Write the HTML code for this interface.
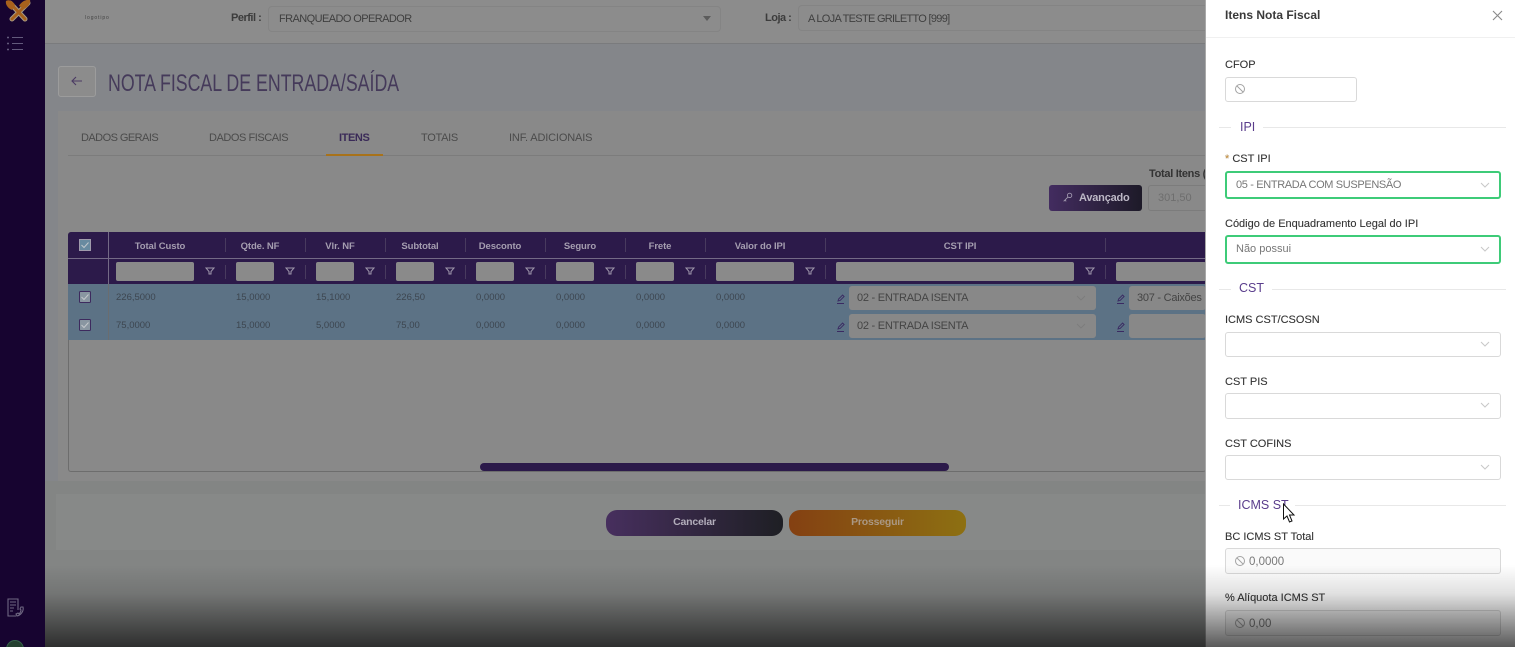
<!DOCTYPE html>
<html lang="pt"><head><meta charset="utf-8"><title>Nota Fiscal</title>
<style>
html,body{margin:0;padding:0;width:1515px;height:647px;overflow:hidden;background:#84868a;font-family:"Liberation Sans",sans-serif}
#root{position:relative;width:1515px;height:647px;overflow:hidden}
#root div,#root svg{position:absolute;box-sizing:border-box;white-space:nowrap}
.t{line-height:14px}
.tab{font-size:11px;color:#4b4b4b;top:131px}
.th{font-size:9.500px;font-weight:bold;color:#a59eb0;top:240px;text-align:center;letter-spacing:-.1px}
.sep{width:1px;background:#483a5e}
.fi{top:262px;height:19px;background:#8a8a8a;border-radius:2px}
.c{font-size:9.500px;color:#3d4650}
.sel{background:#888;border-radius:3px;height:24px;font-size:11px;color:#444;line-height:25px;padding-left:8px;letter-spacing:-.25px}
.lab{font-size:11px;color:#333;left:1225px;-webkit-text-stroke:.1px #333}
.box{left:1225px;width:276px;height:25px;background:#fff;border:1px solid #d9d9d9;border-radius:3px;font-size:11px;color:#777;line-height:23px}
.sec{font-size:12.500px;color:#5a3d8c;line-height:16px}
.hr{height:1px;background:#e8e8e8}
</style></head><body><div id="root">

<!-- lower page background -->
<div style="left:45px;top:481px;width:1161px;height:166px;background:#838584"></div>

<!-- header -->
<div style="left:45px;top:0;width:1161px;height:44px;background:#8c8c8c;border-bottom:1px solid #7a7b7d"></div>
<div class="t" style="left:85px;top:11px;font-size:5px;letter-spacing:.9px;color:#444">logotipo</div>
<div class="t" style="left:231px;top:11px;font-size:11px;font-weight:bold;color:#3c3c3c;letter-spacing:-.5px">Perfil :</div>
<div style="left:268px;top:6px;width:453px;height:26px;border:1px solid #848484;border-radius:4px"></div>
<div class="t" style="left:279px;top:12px;font-size:11px;color:#3f3f3f;letter-spacing:-.58px">FRANQUEADO OPERADOR</div>
<div style="left:703px;top:16px;border:4px solid transparent;border-top:5px solid #5c5c5c"></div>
<div class="t" style="left:765px;top:11px;font-size:11px;font-weight:bold;color:#3c3c3c;letter-spacing:-.5px">Loja :</div>
<div style="left:798px;top:5px;width:408px;height:26px;border:1px solid #848484;border-right:0;border-radius:4px 0 0 4px"></div>
<div class="t" style="left:808px;top:12px;font-size:11px;color:#3f3f3f;letter-spacing:-.7px">A LOJA TESTE GRILETTO [999]</div>

<!-- title -->
<div style="left:58px;top:66px;width:38px;height:31px;background:#8c8c8c;border:1px solid #9c9c9c;border-radius:3px"></div>
<svg style="left:70px;top:74px" width="14" height="14" viewBox="0 0 14 14" fill="none" stroke="#4b3a63" stroke-width="1.100"><path d="M12 7H2M6 3L2 7l4 4"/></svg>
<div style="left:108px;top:69px;font-size:24px;line-height:30px;color:#453a5a;transform:scaleX(.74);transform-origin:0 0">NOTA FISCAL DE ENTRADA/SAÍDA</div>

<!-- card -->
<div style="left:58px;top:111px;width:1148px;height:370px;background:#898989"></div>
<div class="t tab" style="left:81px;letter-spacing:-.55px">DADOS GERAIS</div>
<div class="t tab" style="left:209px;letter-spacing:-.45px">DADOS FISCAIS</div>
<div class="t tab" style="left:339px;color:#3a2a58;font-weight:bold;letter-spacing:-.4px">ITENS</div>
<div class="t tab" style="left:421px;letter-spacing:-.3px">TOTAIS</div>
<div class="t tab" style="left:509px;letter-spacing:-.15px">INF. ADICIONAIS</div>
<div style="left:68px;top:155px;width:1138px;height:1px;background:#7c7c7c"></div>
<div style="left:326px;top:154px;width:57px;height:2px;background:#a8721a"></div>

<div class="t" style="left:1149px;top:167px;font-size:11px;font-weight:bold;color:#333;width:57px;overflow:hidden;letter-spacing:-.3px">Total Itens (R$)</div>
<div style="left:1049px;top:185px;width:93px;height:26px;border-radius:3px;background:linear-gradient(90deg,#432c60,#1d1a28)"></div>
<svg style="left:1062px;top:192px" width="11" height="11" viewBox="0 0 13 13" fill="none" stroke="#a59db2" stroke-width="1"><circle cx="9" cy="4" r="2.600"/><path d="M7 6L2 11M3.500 9.500l1.500 1.500"/></svg>
<div class="t" style="left:1079px;top:191px;font-size:11px;font-weight:bold;color:#bdb8c6;letter-spacing:-.2px">Avançado</div>
<div style="left:1148px;top:185px;width:58px;height:26px;border:1px solid #7c7c7c;border-right:0;border-radius:3px 0 0 3px"></div>
<div class="t" style="left:1158px;top:191px;font-size:11px;color:#6e6e6e">301,50</div>

<!-- table -->
<div style="left:68px;top:232px;width:1138px;height:240px;border:1px solid #6d6d6d;border-right:0;border-radius:3px"></div>
<div style="left:68px;top:232px;width:1138px;height:52px;background:#2c1a4a;border-radius:3px 0 0 0"></div>
<div style="left:68px;top:258px;width:1138px;height:1px;background:#746a86"></div>
<div style="left:108px;top:232px;width:1px;height:52px;background:#746a86"></div>
<div style="left:68px;top:284px;width:1138px;height:56px;background:#5c7285"></div>
<div style="left:108px;top:284px;width:1px;height:56px;background:#6a6d70"></div>

<svg style="left:79px;top:239px" width="12" height="12" viewBox="0 0 12 12" fill="#688aa0" stroke="#a09bac"><rect x=".5" y=".5" width="11" height="11"/><path d="M2.500 6l2.500 2.500 4.500-5" fill="none" stroke="#c0c7cc"/></svg>
<svg style="left:79px;top:291px" width="12" height="12" viewBox="0 0 12 12" fill="#8996a1" stroke="#3d2a5e"><rect x=".5" y=".5" width="11" height="11" rx="1"/><path d="M2.500 6l2.500 2.500 4.500-5" fill="none" stroke="#c4c8cc"/></svg>
<svg style="left:79px;top:319px" width="12" height="12" viewBox="0 0 12 12" fill="#8996a1" stroke="#3d2a5e"><rect x=".5" y=".5" width="11" height="11" rx="1"/><path d="M2.500 6l2.500 2.500 4.500-5" fill="none" stroke="#c4c8cc"/></svg>

<div class="t th" style="left:108px;width:104px">Total Custo</div>
<div class="t th" style="left:226px;width:68px">Qtde. NF</div>
<div class="t th" style="left:306px;width:68px">Vlr. NF</div>
<div class="t th" style="left:386px;width:68px">Subtotal</div>
<div class="t th" style="left:466px;width:68px">Desconto</div>
<div class="t th" style="left:546px;width:68px">Seguro</div>
<div class="t th" style="left:626px;width:68px">Frete</div>
<div class="t th" style="left:706px;width:108px">Valor do IPI</div>
<div class="t th" style="left:826px;width:268px">CST IPI</div>

<div class="sep" style="left:225px;top:238px;height:14px"></div><div class="sep" style="left:305px;top:238px;height:14px"></div><div class="sep" style="left:385px;top:238px;height:14px"></div><div class="sep" style="left:465px;top:238px;height:14px"></div><div class="sep" style="left:545px;top:238px;height:14px"></div><div class="sep" style="left:625px;top:238px;height:14px"></div><div class="sep" style="left:705px;top:238px;height:14px"></div><div class="sep" style="left:825px;top:238px;height:14px"></div><div class="sep" style="left:1105px;top:238px;height:14px"></div>
<div class="sep" style="left:225px;top:265px;height:14px"></div><div class="sep" style="left:305px;top:265px;height:14px"></div><div class="sep" style="left:385px;top:265px;height:14px"></div><div class="sep" style="left:465px;top:265px;height:14px"></div><div class="sep" style="left:545px;top:265px;height:14px"></div><div class="sep" style="left:625px;top:265px;height:14px"></div><div class="sep" style="left:705px;top:265px;height:14px"></div><div class="sep" style="left:825px;top:265px;height:14px"></div><div class="sep" style="left:1105px;top:265px;height:14px"></div>

<div class="fi" style="left:116px;width:78px"></div><div class="fi" style="left:236px;width:38px"></div><div class="fi" style="left:316px;width:38px"></div><div class="fi" style="left:396px;width:38px"></div><div class="fi" style="left:476px;width:38px"></div><div class="fi" style="left:556px;width:38px"></div><div class="fi" style="left:636px;width:38px"></div><div class="fi" style="left:716px;width:78px"></div><div class="fi" style="left:836px;width:238px"></div><div class="fi" style="left:1116px;width:90px"></div>

<svg style="left:0;top:0" width="1206" height="300" fill="none" stroke="#9f98ac" stroke-width="1"><path d="M206 268h8l-3 3.500v2.500h-2v-2.500zM286 268h8l-3 3.500v2.500h-2v-2.500zM366 268h8l-3 3.500v2.500h-2v-2.500zM446 268h8l-3 3.500v2.500h-2v-2.500zM526 268h8l-3 3.500v2.500h-2v-2.500zM606 268h8l-3 3.500v2.500h-2v-2.500zM686 268h8l-3 3.500v2.500h-2v-2.500zM806 268h8l-3 3.500v2.500h-2v-2.500zM1086 268h8l-3 3.500v2.500h-2v-2.500z"/></svg>

<div class="t c" style="left:116px;top:291px">226,5000</div><div class="t c" style="left:236px;top:291px">15,0000</div><div class="t c" style="left:316px;top:291px">15,1000</div><div class="t c" style="left:396px;top:291px">226,50</div><div class="t c" style="left:476px;top:291px">0,0000</div><div class="t c" style="left:556px;top:291px">0,0000</div><div class="t c" style="left:636px;top:291px">0,0000</div><div class="t c" style="left:716px;top:291px">0,0000</div>
<div class="t c" style="left:116px;top:319px">75,0000</div><div class="t c" style="left:236px;top:319px">15,0000</div><div class="t c" style="left:316px;top:319px">5,0000</div><div class="t c" style="left:396px;top:319px">75,00</div><div class="t c" style="left:476px;top:319px">0,0000</div><div class="t c" style="left:556px;top:319px">0,0000</div><div class="t c" style="left:636px;top:319px">0,0000</div><div class="t c" style="left:716px;top:319px">0,0000</div>

<div class="sel" style="left:849px;top:286px;width:247px">02 - ENTRADA ISENTA</div>
<div class="sel" style="left:849px;top:314px;width:247px">02 - ENTRADA ISENTA</div>
<div class="sel" style="left:1129px;top:286px;width:77px;overflow:hidden">307 - Caixões</div>
<div class="sel" style="left:1129px;top:314px;width:77px"></div>
<svg style="left:0;top:0" width="1206" height="345" fill="none" stroke="#3a2a62" stroke-width=".9"><path d="M838 301l.6-2 4-4 1.500 1.500-4 4zM837 303.500h7M838 329l.6-2 4-4 1.500 1.500-4 4zM837 331.500h7M1118 301l.6-2 4-4 1.500 1.500-4 4zM1117 303.500h7M1118 329l.6-2 4-4 1.500 1.500-4 4zM1117 331.500h7"/><path d="M1077 296l4 4 4-4M1077 324l4 4 4-4" stroke="#7c7c7c"/></svg>

<div style="left:480px;top:463px;width:469px;height:8px;background:#2c1a4a;border-radius:4px"></div>

<!-- footer card -->
<div style="left:56px;top:494px;width:1150px;height:56px;background:#878988"></div>
<div style="left:606px;top:510px;width:177px;height:26px;border-radius:11px;background:linear-gradient(90deg,#472f5e,#1e1f24)"></div>
<div class="t" style="left:606px;top:515px;width:177px;text-align:center;font-size:10.500px;font-weight:bold;color:#b3aebb;letter-spacing:-.2px">Cancelar</div>
<div style="left:789px;top:510px;width:177px;height:26px;border-radius:11px;background:linear-gradient(90deg,#844012,#8d7012)"></div>
<div class="t" style="left:789px;top:515px;width:177px;text-align:center;font-size:10.500px;font-weight:bold;color:#aa9884;letter-spacing:-.2px">Prosseguir</div>

<!-- sidebar -->
<div style="left:0;top:0;width:45px;height:647px;background:#170430"></div>
<svg style="left:3px;top:0" width="30" height="23" viewBox="0 0 30 23" fill="none" stroke-linecap="round"><path d="M7 3l15 16M25 3L9 19" stroke="#a89a82" stroke-width="5"/><path d="M7 3l15 16M25 3L9 19" stroke="#a8611c" stroke-width="3"/><path d="M3 1c3-2 7 0 9 4l-3 5C6 9 2 5 3 1zM16 6c2-4 7-7 11-6 1 3-2 7-6 9z" fill="#a8611c"/></svg>
<svg style="left:6px;top:36px" width="18" height="16" fill="none" stroke="#635a7c" stroke-width="1"><path d="M6 1.500h11M6 7.500h11M6 13.500h11"/><path d="M1 1.500h2M1 7.500h2M1 13.500h2" stroke-width="1.500"/></svg>
<svg style="left:6px;top:597px" width="20" height="22" fill="none" stroke="#6f6882" stroke-width="1.100"><path d="M12 13V2H2v17h8M4 5h6M4 8h6M4 11h4M4 14h3"/><path d="M17 10c1 4-2 8-6 9l-1-2 2-1 1 1c1-1 2-2 2-4l-1-1 1-2z"/></svg>
<div style="left:6px;top:640px;width:18px;height:18px;border-radius:50%;background:#24402f;border:1px solid #35604a"></div>

<!-- panel -->
<div style="left:1205px;top:0;width:310px;height:647px;background:#fff;border-left:1px solid #a9a9a9"></div>
<div class="t" style="left:1225px;top:8px;font-size:12px;font-weight:bold;color:#3a3a3a">Itens Nota Fiscal</div>
<svg style="left:1492px;top:10px" width="11" height="11" stroke="#8a8a8a" stroke-width="1.100" fill="none"><path d="M1 1l9 9M10 1l-9 9"/></svg>
<div class="hr" style="left:1206px;top:37px;width:309px;background:#f0f0f0"></div>

<div class="t lab" style="top:58px">CFOP</div>
<div class="box" style="top:77px;width:132px"></div>

<div class="hr" style="left:1219px;top:127px;width:12px"></div><div class="t sec" style="left:1240px;top:119px">IPI</div><div class="hr" style="left:1263px;top:127px;width:243px"></div>

<div class="t lab" style="top:152px"><span style="color:#e0a040">* </span>CST IPI</div>
<div class="box" style="top:171px;height:28px;border:2px solid #3ecb78;padding-left:9px;line-height:24px;letter-spacing:-.35px">05 - ENTRADA COM SUSPENSÃO</div>
<div class="t lab" style="top:217px">Código de Enquadramento Legal do IPI</div>
<div class="box" style="top:235px;height:29px;border:2px solid #3ecb78;padding-left:9px;line-height:25px">Não possui</div>

<div class="hr" style="left:1219px;top:289px;width:12px"></div><div class="t sec" style="left:1239px;top:280px">CST</div><div class="hr" style="left:1272px;top:289px;width:234px"></div>

<div class="t lab" style="top:313px">ICMS CST/CSOSN</div>
<div class="box" style="top:332px"></div>
<div class="t lab" style="top:375px">CST PIS</div>
<div class="box" style="top:393px;height:26px"></div>
<div class="t lab" style="top:437px">CST COFINS</div>
<div class="box" style="top:455px"></div>

<div class="hr" style="left:1219px;top:505px;width:11px"></div><div class="t sec" style="left:1238px;top:497px">ICMS ST</div><div class="hr" style="left:1295px;top:505px;width:211px"></div>

<div class="t lab" style="top:530px">BC ICMS ST Total</div>
<div class="box" style="top:548px;height:26px;background:#fafafa;padding-left:23px;line-height:26px;font-size:11.500px">0,0000</div>
<div class="t lab" style="top:591px">% Alíquota ICMS ST</div>
<div class="box" style="top:610px;height:26px;background:#f5f5f5;padding-left:23px;line-height:26px;font-size:11.500px">0,00</div>

<svg style="left:0;top:0" width="1515" height="647" fill="none" stroke="#a3a3a3">
<path d="M1481 342l4 4 4-4M1481 403l4 4 4-4M1481 465l4 4 4-4M1481 183l4 4 4-4M1481 247l4 4 4-4" stroke="#c8c8c8"/>
<circle cx="1240" cy="89" r="4.500"/><path d="M1237 86l6 6"/>
<circle cx="1240" cy="561" r="4.500"/><path d="M1237 558l6 6"/>
<circle cx="1240" cy="623" r="4.500"/><path d="M1237 620l6 6"/>
</svg>

<!-- bottom fade -->
<div style="left:45px;top:565px;width:1470px;height:82px;background:linear-gradient(180deg,rgba(0,0,0,0),rgba(0,0,0,.12) 35%,rgba(0,0,0,.65))"></div>

<!-- cursor -->
<svg style="left:1282px;top:503px" width="14" height="21" viewBox="0 0 14 21"><path d="M1.500 1v15l3.500-3 2.500 6 2.500-1-2.500-6h4.500z" fill="#fff" stroke="#111" stroke-width="1"/></svg>
</div></body></html>
